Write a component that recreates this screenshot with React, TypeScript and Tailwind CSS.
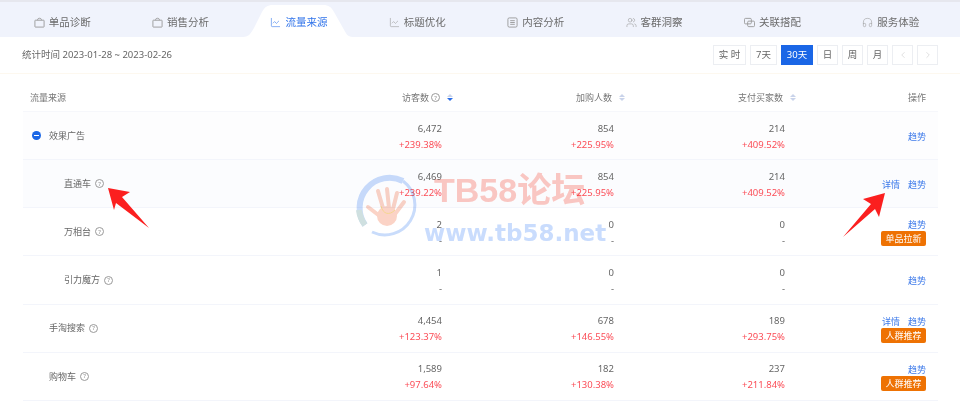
import { ChartLine, ChevronLeft, ChevronRight, Headphones, Users } from "lucide-react";
import type { ReactNode } from "react";

const font = { fontFamily: '"Noto Sans", "Noto Sans CJK SC", sans-serif' };

type IconProps = { className: string; strokeWidth?: number };

const LinkedSquares = ({ className }: IconProps) => (
  <svg viewBox="0 0 12 12" fill="none" stroke="currentColor" strokeWidth="1" className={className}>
    <rect x="0.5" y="1.5" width="7.5" height="6" rx="1.2" />
    <rect x="4" y="4.5" width="7.5" height="6" rx="1.2" />
  </svg>
);

const Bag = ({ className }: IconProps) => (
  <svg viewBox="0 0 12 12" fill="none" stroke="currentColor" strokeWidth="1" className={className}>
    <rect x="1" y="3.5" width="10" height="7.5" rx="0.5" />
    <path d="M4 3.5 V2.5 C4 1 8 1 8 2.5 V3.5" />
  </svg>
);

const Doc = ({ className }: IconProps) => (
  <svg viewBox="0 0 12 12" fill="none" stroke="currentColor" strokeWidth="1" className={className}>
    <rect x="1" y="1" width="10" height="10" rx="1.5" />
    <path d="M3.5 4 H8.5 M3.5 6 H8.5 M3.5 8 H8.5" />
  </svg>
);

const tabs = [
  { label: "单品诊断", Icon: Bag },
  { label: "销售分析", Icon: Bag },
  { label: "流量来源", Icon: ChartLine, active: true },
  { label: "标题优化", Icon: ChartLine },
  { label: "内容分析", Icon: Doc },
  { label: "客群洞察", Icon: Users },
  { label: "关联搭配", Icon: LinkedSquares },
  { label: "服务体验", Icon: Headphones },
];

const ranges = [
  { label: "实 时", w: "w-[33px]" },
  { label: "7天", w: "w-[27px]" },
  { label: "30天", w: "w-[32px]", active: true },
  { label: "日", w: "w-[21px]" },
  { label: "周", w: "w-[21px]" },
  { label: "月", w: "w-[21px]" },
];

const rows = [
  { name: "效果广告", indent: "pl-[26px]", expand: true, help: false, v: ["6,472", "+239.38%"], c: ["854", "+225.95%"], b: ["214", "+409.52%"], bg: "bg-[#fdfdfe]" },
  { name: "直通车", indent: "pl-[41px]", help: true, v: ["6,469", "+239.22%"], c: ["854", "+225.95%"], b: ["214", "+409.52%"], detail: true, bg: "bg-[#fbfcfe]" },
  { name: "万相台", indent: "pl-[41px]", help: true, v: ["2", "-"], c: ["0", "-"], b: ["0", "-"], badge: "单品拉新" },
  { name: "引力魔方", indent: "pl-[41px]", help: true, v: ["1", "-"], c: ["0", "-"], b: ["0", "-"] },
  { name: "手淘搜索", indent: "pl-[26px]", help: true, v: ["4,454", "+123.37%"], c: ["678", "+146.55%"], b: ["189", "+293.75%"], detail: true, badge: "人群推荐" },
  { name: "购物车", indent: "pl-[26px]", help: true, v: ["1,589", "+97.64%"], c: ["182", "+130.38%"], b: ["237", "+211.84%"], badge: "人群推荐" },
];

const Help = () => (
  <span className="inline-flex h-[9px] w-[9px] items-center justify-center rounded-full border border-[#9a9a9a] text-[6px] leading-none text-[#888]">
    ?
  </span>
);

const Sort = ({ active }: { active?: boolean }) => (
  <span className="ml-[7px] inline-flex w-[6px] flex-col items-center gap-px">
    <span className="h-0 w-0 border-x-[3px] border-b-[3px] border-x-transparent border-b-[#c9d3ea]" />
    <span className={`h-0 w-0 border-x-[3px] border-t-[3px] border-x-transparent ${active ? "border-t-[#2b6ee8]" : "border-t-[#c9d3ea]"}`} />
  </span>
);

const Head = ({ children }: { children: ReactNode }) => (
  <div className="mr-[-11px] flex items-center justify-end text-[9px] text-[#777]">{children}</div>
);

const Metric = ({ pair }: { pair: string[] }) => (
  <div className="flex flex-col items-end gap-[2px] pt-[2px] text-[9.5px] leading-[14px]">
    <span className="text-[#666]">{pair[0]}</span>
    <span className={pair[1] === "-" ? "text-[#666]" : "text-[#fb4d57]"}>{pair[1]}</span>
  </div>
);

const Watermark = () => (
  <div className="pointer-events-none absolute left-[353px] top-[172px] flex mix-blend-multiply">
    <svg viewBox="0 0 68 68" className="h-[68px] w-[68px]" fill="none">
      <path d="M12 53 A30 30 0 0 1 50 9" stroke="#c9dcfb" strokeWidth="6" />
      <path d="M12 53 A30 30 0 0 1 6 38" stroke="#cfe0e0" strokeWidth="6" />
      <path d="M50 9 A30 30 0 0 1 19 60" stroke="#c9dcfb" strokeWidth="3" />
      <g stroke="#fbd3c6" strokeWidth="4" strokeLinecap="round">
        <path d="M15 35 L28 45" />
        <path d="M25 19 L30 36" />
        <path d="M34 17 L36 36" />
        <path d="M44 21 L40 37" />
        <path d="M51 30 L42 42" />
      </g>
      <ellipse cx="34" cy="44" rx="10" ry="10" fill="#fbd3c6" />
      <path d="M28 34 C30 42 36 44 42 38" stroke="#f5d78e" strokeWidth="1" />
    </svg>
    <div className="ml-[3px] flex flex-col">
      <span className="ml-[10px] text-[34px] font-bold leading-[36px] text-[#fdc9c3]" style={{ fontFamily: '"Liberation Sans", "Noto Sans CJK SC", sans-serif' }}>
        TB58论坛
      </span>
      <span className="mt-[10px] text-[23px] font-bold leading-[30px] text-[#c9dcfd]" style={{ fontFamily: '"DejaVu Sans", sans-serif' }}>
        www.tb58.net
      </span>
    </div>
  </div>
);

const Arrows = () => (
  <svg viewBox="0 0 960 414" className="pointer-events-none absolute left-0 top-0 h-[414px] w-[960px]">
    <polygon points="108,188 130,192 122,197 149,228 116,203 114,210" fill="#fb1f1f" />
    <polygon points="885,193 863,199 871,204 843,237 875,209 879,217" fill="#fb1f1f" />
  </svg>
);

export default function App() {
  return (
    <div className="relative h-[414px] w-[960px] overflow-hidden bg-white" style={font}>
      <div className="h-[2px] bg-[#e6e7ee]" />
      <nav className="flex h-[35px] bg-[#f0f3fc] pl-[3px] pr-[10px]">
        {tabs.map(({ label, Icon, active }) => (
          <div
            key={label}
            className={`relative flex flex-1 items-center justify-center gap-[4px] pt-[6px] text-[10.5px] ${active ? "text-[#3174ea]" : "text-[#6b6b6b]"}`}
          >
            {active && (
              <svg viewBox="0 0 110 32" className="absolute bottom-0 left-[3px] h-[32px] w-[110px]">
                <path d="M0 32 C6 32 8 28 11 23 L19 7 C22 2 24 0 30 0 L80 0 C86 0 88 2 91 7 L100 23 C103 28 104 32 110 32 Z" fill="#fff" />
              </svg>
            )}
            <Icon className={`relative h-[11px] w-[11px] ${active ? "text-[#3174ea]" : "text-[#999]"}`} strokeWidth={1.25} />
            <span className="relative">{label}</span>
          </div>
        ))}
      </nav>

      <div className="flex h-[37px] items-center justify-between border-b border-[#fdf8ef] pl-[22px] pr-[22px]">
        <span className="text-[9.5px] text-[#666]">统计时间 2023-01-28 ~ 2023-02-26</span>
        <div className="flex gap-[4px]">
          {ranges.map((r) => (
            <button
              key={r.label}
              className={`flex h-[20px] items-center justify-center border text-[9.5px] ${r.w} ${r.active ? "border-[#1a66e6] bg-[#1a66e6] text-white" : "border-[#eceef2] bg-white text-[#666]"}`}
            >
              {r.label}
            </button>
          ))}
          <button className="flex h-[20px] w-[21px] items-center justify-center border border-[#eceef2] text-[#c4c4c4]">
            <ChevronLeft className="h-[10px] w-[10px]" strokeWidth={1.25} />
          </button>
          <button className="flex h-[20px] w-[21px] items-center justify-center border border-[#eceef2] text-[#c4c4c4]">
            <ChevronRight className="h-[10px] w-[10px]" strokeWidth={1.25} />
          </button>
        </div>
      </div>

      <div className="ml-[23px] w-[915px]">
        <div className="grid h-[38px] grid-cols-[300px_119px_172px_171px_141px] items-center border-b border-[#f6f7fb] pt-[10px]">
          <div className="pl-[7px] text-[9px] text-[#777]">流量来源</div>
          <Head>
            <span>访客数</span>
            <span className="ml-[2px] flex"><Help /></span>
            <Sort active />
          </Head>
          <Head>
            <span>加购人数</span>
            <Sort />
          </Head>
          <Head>
            <span>支付买家数</span>
            <Sort />
          </Head>
          <div className="text-right text-[9px] text-[#777]">操作</div>
        </div>

        {rows.map((row) => (
          <div
            key={row.name}
            className={`grid h-[48.17px] grid-cols-[300px_119px_172px_171px_141px] items-center border-b border-[#f3f5fb] ${row.bg ?? ""}`}
          >
            <div className={`relative flex items-center gap-[4px] text-[9px] text-[#666] ${row.indent}`}>
              {row.expand && (
                <span className="absolute left-[9px] flex h-[9px] w-[9px] items-center justify-center rounded-full bg-[#1a66e6]">
                  <span className="h-px w-[5px] bg-white" />
                </span>
              )}
              <span>{row.name}</span>
              {row.help && <Help />}
            </div>
            <Metric pair={row.v} />
            <Metric pair={row.c} />
            <Metric pair={row.b} />
            <div className="flex flex-col items-end pt-[1px] text-[9px] leading-[13px] text-[#3f7bea]">
              <div className="flex gap-[8px]">
                {row.detail && <span>详情</span>}
                <span>趋势</span>
              </div>
              {row.badge && (
                <span className="flex h-[15px] w-[45px] items-center justify-center rounded-[2px] bg-[#ee7203] text-white">
                  {row.badge}
                </span>
              )}
            </div>
          </div>
        ))}
      </div>

      <Watermark />
      <Arrows />
    </div>
  );
}
